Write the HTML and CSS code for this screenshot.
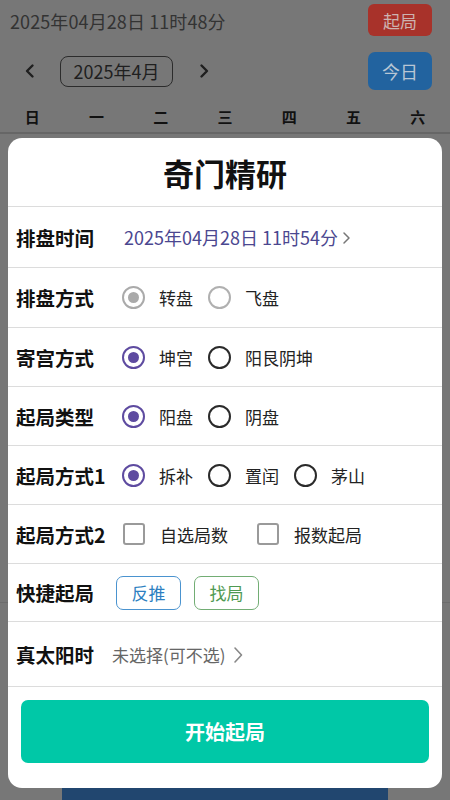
FILE: index.html
```html
<!DOCTYPE html>
<html lang="zh">
<head>
<meta charset="utf-8">
<title>奇门精研</title>
<link rel="stylesheet" href="styles.css">
</head>
<body>
<div class="page">
  <div class="topbar">
    <span class="now">2025年04月28日 11时48分</span>
    <span class="btn-red">起局</span>
  </div>
  <div class="nav">
    <span class="arrow">
      <svg width="14" height="16" viewBox="0 0 14 16"><path d="M9.5 2.5 L4 8 L9.5 13.5" fill="none" stroke="#1f1f1f" stroke-width="2.4" stroke-linecap="round" stroke-linejoin="round"/></svg>
    </span>
    <span class="month">2025年4月</span>
    <span class="arrow arrow-r">
      <svg width="14" height="16" viewBox="0 0 14 16"><path d="M4.5 2.5 L10 8 L4.5 13.5" fill="none" stroke="#1f1f1f" stroke-width="2.4" stroke-linecap="round" stroke-linejoin="round"/></svg>
    </span>
    <span class="spacer"></span>
    <span class="btn-blue">今日</span>
  </div>
  <div class="weekdays">
    <span>日</span><span>一</span><span>二</span><span>三</span><span>四</span><span>五</span><span>六</span>
  </div>
  <div class="cal"></div>
  <div class="cal-rest">
    <div class="bluebar"></div>
  </div>
</div>

<div class="overlay">
  <div class="card">
    <div class="title">奇门精研</div>

    <div class="row">
      <span class="label">排盘时间</span>
      <span class="date">2025年04月28日 11时54分
        <svg class="chev" width="9" height="14" viewBox="0 0 9 14"><path d="M2 2 L7 7 L2 12" fill="none" stroke="#777" stroke-width="1.5" stroke-linecap="round" stroke-linejoin="round"/></svg>
      </span>
    </div>

    <div class="row">
      <span class="label">排盘方式</span>
      <span class="opts">
        <span class="opt"><span class="radio dis-on"></span><span class="otext">转盘</span></span>
        <span class="opt"><span class="radio dis-off"></span><span class="otext">飞盘</span></span>
      </span>
    </div>

    <div class="row">
      <span class="label">寄宫方式</span>
      <span class="opts">
        <span class="opt"><span class="radio on"></span><span class="otext">坤宫</span></span>
        <span class="opt"><span class="radio"></span><span class="otext">阳艮阴坤</span></span>
      </span>
    </div>

    <div class="row">
      <span class="label">起局类型</span>
      <span class="opts">
        <span class="opt"><span class="radio on"></span><span class="otext">阳盘</span></span>
        <span class="opt"><span class="radio"></span><span class="otext">阴盘</span></span>
      </span>
    </div>

    <div class="row">
      <span class="label">起局方式1</span>
      <span class="opts">
        <span class="opt"><span class="radio on"></span><span class="otext">拆补</span></span>
        <span class="opt"><span class="radio"></span><span class="otext">置闰</span></span>
        <span class="opt"><span class="radio"></span><span class="otext">茅山</span></span>
      </span>
    </div>

    <div class="row">
      <span class="label">起局方式2</span>
      <span class="opts">
        <span class="opt opt-cb"><span class="check"></span><span class="otext">自选局数</span></span>
        <span class="opt opt-cb"><span class="check"></span><span class="otext">报数起局</span></span>
      </span>
    </div>

    <div class="row row-quick">
      <span class="label">快捷起局</span>
      <span class="opts quick">
        <span class="qbtn qblue">反推</span>
        <span class="qbtn qgreen">找局</span>
      </span>
    </div>

    <div class="row row-sun">
      <span class="label">真太阳时</span>
      <span class="sun">未选择(可不选)
        <svg class="chev2" width="12" height="20" viewBox="0 0 12 20"><path d="M3 3 L9.5 10 L3 17" fill="none" stroke="#888" stroke-width="1.6" stroke-linecap="round" stroke-linejoin="round"/></svg>
      </span>
    </div>

    <div class="footer">
      <div class="start">开始起局</div>
    </div>
  </div>
</div>
</body>
</html>
```
FILE: styles.css
```css
* { box-sizing: border-box; }
html, body {
  margin: 0;
  padding: 0;
  width: 450px;
  height: 800px;
  overflow: hidden;
}
body {
  font-family: "Noto Sans CJK SC", "Noto Sans", sans-serif;
  background: #777777;
  position: relative;
}

/* underlying (dimmed) page */
.page {
  height: 800px;
  display: flex;
  flex-direction: column;
  background: #777777;
}
.topbar {
  height: 42px;
  display: flex;
  align-items: center;
  justify-content: space-between;
  padding: 0 18px 0 10px;
}
.now {
  font-size: 18px;
  color: #333333;
  letter-spacing: 0.1px;
}
.btn-red {
  width: 64px;
  height: 32px;
  margin-top: -2px;
  border-radius: 6px;
  background: #a8322a;
  color: #cdb3b0;
  font-size: 17px;
  display: flex;
  align-items: center;
  justify-content: center;
}
.nav {
  height: 58px;
  display: flex;
  align-items: center;
  padding: 0 18px 0 23px;
}
.arrow {
  width: 14px;
  display: flex;
  margin-right: 23px;
}
.arrow-r { margin-left: 24px; margin-right: 0; }
.month {
  width: 113px;
  height: 31px;
  border: 1.5px solid #2c2c2c;
  border-radius: 8px;
  font-size: 18px;
  color: #1f1f1f;
  display: flex;
  align-items: center;
  justify-content: center;
}
.spacer { flex: 1; }
.btn-blue {
  width: 64px;
  height: 38px;
  border-radius: 7px;
  background: #22639f;
  color: #b9c6d4;
  font-size: 18px;
  display: flex;
  align-items: center;
  justify-content: center;
}
.weekdays {
  height: 34px;
  display: grid;
  grid-template-columns: repeat(7, 1fr);
  align-items: center;
  border-bottom: 2px solid #666666;
}
.weekdays span {
  text-align: center;
  font-size: 15px;
  font-weight: 700;
  color: #111111;
}
.cal {
  height: 469px;
  border-bottom: 1px solid #6c6c6c;
}
.cal-rest {
  flex: 1;
  display: flex;
  align-items: flex-end;
  justify-content: center;
}
.bluebar {
  width: 326px;
  height: 20px;
  background: #21466f;
  border-radius: 6px 6px 0 0;
}

/* modal */
.overlay {
  position: absolute;
  inset: 0;
  padding: 138px 8px 12px 8px;
}
.card {
  height: 650px;
  background: #ffffff;
  border-radius: 14px;
  display: flex;
  flex-direction: column;
  overflow: hidden;
}
.title {
  height: 69px;
  flex: none;
  display: flex;
  align-items: center;
  justify-content: center;
  font-size: 31px;
  font-weight: 700;
  color: #111111;
  border-bottom: 1px solid #dcdcdc;
}
.row {
  height: 60px;
  flex: none;
  display: grid;
  grid-template-columns: 106px 1fr;
  align-items: center;
  padding-left: 8px;
  border-bottom: 1px solid #dcdcdc;
}
.row:nth-of-type(2) { height: 61px; }
.row:nth-of-type(3) { height: 60px; }
.row:nth-of-type(4),
.row:nth-of-type(5),
.row:nth-of-type(6),
.row:nth-of-type(7) { height: 59px; }
.row-quick { height: 58px; }
.row-sun { height: 65px; grid-template-columns: 96px 1fr; }
.row-quick { grid-template-columns: 100px 1fr; }

.label {
  font-size: 19.5px;
  font-weight: 700;
  color: #111111;
  white-space: nowrap;
}
.date {
  margin-left: 2px;
  font-size: 18px;
  color: #4b4790;
  display: flex;
  align-items: center;
  gap: 4px;
}
.chev { margin-top: 1px; }
.opts {
  display: flex;
  align-items: center;
}
.opt {
  display: flex;
  align-items: center;
  margin-right: 15px;
}
.radio {
  width: 23px;
  height: 23px;
  border-radius: 50%;
  border: 2px solid #2a2a2a;
  position: relative;
  flex: none;
}
.radio.on { border-color: #5e4ba0; }
.radio.on::after,
.radio.dis-on::after {
  content: "";
  position: absolute;
  left: 4px;
  top: 4px;
  width: 11px;
  height: 11px;
  border-radius: 50%;
  background: #5e4ba0;
}
.radio.dis-on { border-color: #aaaaaa; }
.radio.dis-on::after { background: #aaaaaa; }
.radio.dis-off { border-color: #b0b0b0; }
.otext {
  margin-left: 14px;
  font-size: 17px;
  color: #222222;
}
.opt-cb { margin-right: 28px; }
.check {
  width: 22px;
  height: 22px;
  border: 2px solid #9a9a9a;
  border-radius: 3px;
  margin-left: 1px;
  flex: none;
}
.opt-cb .otext { margin-left: 15px; }
.quick { gap: 13px; }
.qbtn {
  width: 65px;
  height: 34px;
  border-radius: 7px;
  font-size: 17px;
  display: flex;
  align-items: center;
  justify-content: center;
}
.qblue {
  border: 1.5px solid #4a93cf;
  color: #2d7fc1;
}
.qgreen {
  border: 1.5px solid #72ad74;
  color: #4f9a52;
}
.sun {
  font-size: 17px;
  color: #666666;
  display: flex;
  align-items: center;
  gap: 6px;
}
.chev2 { margin-top: 1px; }
.footer {
  flex: 1;
  padding: 13px 13px 0 13px;
}
.start {
  height: 63px;
  border-radius: 7px;
  background: #00c8a7;
  color: #ffffff;
  font-size: 20px;
  font-weight: 700;
  display: flex;
  align-items: center;
  justify-content: center;
}
```
